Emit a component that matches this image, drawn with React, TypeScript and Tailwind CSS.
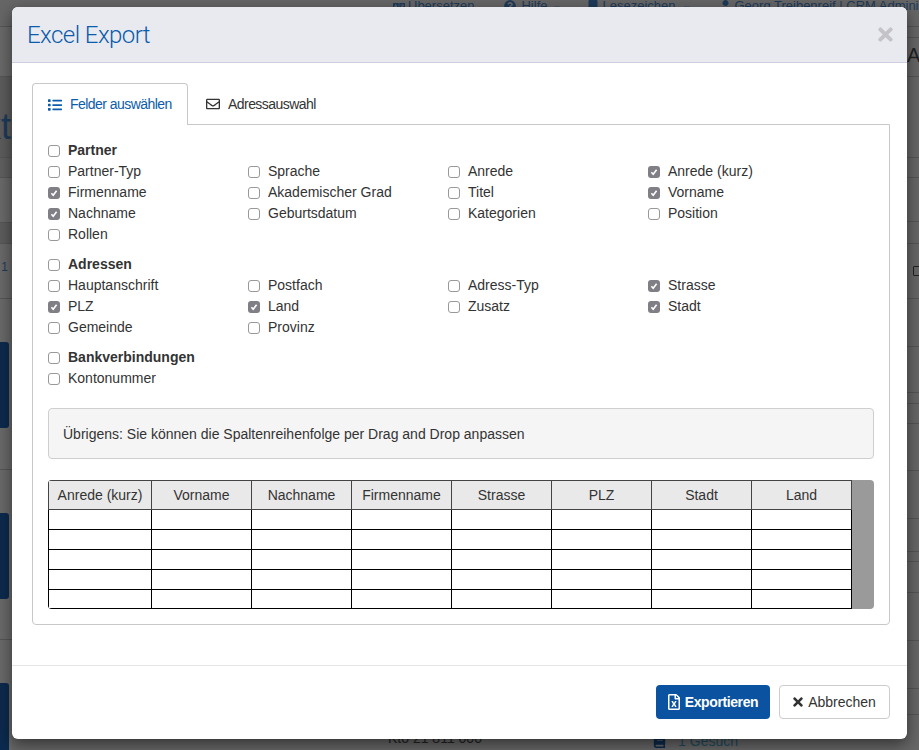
import { FaBook, FaBookmark, FaQuestionCircle, FaRegEnvelope, FaRegFileExcel, FaList, FaTimes, FaUser, FaLanguage, FaCaretDown } from 'react-icons/fa'

type Field = { label: string; checked?: boolean }

const partner: Field[] = [
  { label: 'Partner-Typ' },
  { label: 'Sprache' },
  { label: 'Anrede' },
  { label: 'Anrede (kurz)', checked: true },
  { label: 'Firmenname', checked: true },
  { label: 'Akademischer Grad' },
  { label: 'Titel' },
  { label: 'Vorname', checked: true },
  { label: 'Nachname', checked: true },
  { label: 'Geburtsdatum' },
  { label: 'Kategorien' },
  { label: 'Position' },
  { label: 'Rollen' },
]

const adressen: Field[] = [
  { label: 'Hauptanschrift' },
  { label: 'Postfach' },
  { label: 'Adress-Typ' },
  { label: 'Strasse', checked: true },
  { label: 'PLZ', checked: true },
  { label: 'Land', checked: true },
  { label: 'Zusatz' },
  { label: 'Stadt', checked: true },
  { label: 'Gemeinde' },
  { label: 'Provinz' },
]

const columns = ['Anrede (kurz)', 'Vorname', 'Nachname', 'Firmenname', 'Strasse', 'PLZ', 'Stadt', 'Land']

const leftRows = [
  { h: 'h-[50px]', bg: 'bg-[#696969]' },
  { h: 'h-[81px]', bg: 'bg-[#5c5c5c]', text: 't' },
  { h: 'h-[20px]', bg: 'bg-[#5f5f5f]' },
  { h: 'h-[45px]', bg: 'bg-[#696969]' },
  { h: 'h-[21px]', bg: 'bg-[#5c5c5c]' },
  { h: 'h-[55px]', bg: 'bg-[#696969]', text: '1' },
]

const rightRows = ['h-[11px]', 'h-[39px]', 'h-[81px]', 'h-[20px]', 'h-[44px]', 'h-[22px]', 'h-[55px]', 'h-[48px]', 'h-[46px]', 'h-[11px]', 'h-[20px]', 'h-[47px]', 'h-[48px]', 'h-[33px]', 'h-[10px]', 'h-[31px]', 'h-[48px]', 'h-[48px]', 'h-[26px]']

function Check({ label, checked, bold }: Field & { bold?: boolean }) {
  return (
    <label className={`flex h-[21px] items-center gap-2 text-[14px] text-[#333] ${bold ? 'font-bold' : ''}`}>
      {checked ? (
        <span className="flex h-3 w-3 items-center justify-center rounded-[3px] bg-[#807f85]">
          <svg viewBox="0 0 12 12" className="h-3 w-3" fill="none" stroke="white" strokeWidth="1.6">
            <path d="M3.4 6.2 5.2 8.2 8.6 3.8" />
          </svg>
        </span>
      ) : (
        <span className="h-3 w-3 rounded-[3px] border border-[#999] bg-white" />
      )}
      {label}
    </label>
  )
}

function Group({ title, fields }: { title: string; fields: Field[] }) {
  return (
    <div className="mb-[9px]">
      <Check label={title} bold />
      <div className="grid grid-cols-[repeat(4,200px)]">
        {fields.map((f) => (
          <Check key={f.label} {...f} />
        ))}
      </div>
    </div>
  )
}

function Backdrop() {
  return (
    <div className="flex h-[750px] w-[919px] flex-col overflow-hidden bg-[#666666] text-[14px] text-[#1d3a5a]">
      <div className="flex h-[27px] shrink-0 items-start border-b border-[#555] pl-[393px] text-[13px] leading-[12px] whitespace-nowrap">
        <FaLanguage className="mr-[3px] h-[12px] w-[12px] shrink-0" />
        <span className="shrink-0">Übersetzen</span>
        <FaQuestionCircle className="mr-[5px] ml-[30px] h-[12px] w-[12px] shrink-0" />
        <span className="shrink-0">Hilfe</span>
        <FaCaretDown className="mt-[3px] ml-[4px] h-[10px] w-[10px] shrink-0" />
        <FaBookmark className="mr-[5px] ml-[26px] h-[12px] w-[10px] shrink-0" />
        <span className="shrink-0">Lesezeichen</span>
        <FaCaretDown className="mt-[3px] ml-[6px] h-[10px] w-[10px] shrink-0" />
        <FaUser className="mr-[4px] ml-[28px] h-[12px] w-[11px] shrink-0" />
        <span className="shrink-0">Georg Treibenreif | CRM Administrator</span>
      </div>
      <div className="flex min-h-0 flex-1 justify-between">
        <div className="flex w-[12px] flex-col">
          {leftRows.map((r, i) => (
            <div key={i} className={`${r.h} ${r.bg} shrink-0 overflow-hidden border-b border-[#555]`}>
              {r.text === 't' && (
                <span className="mt-[32px] flex justify-end pr-px text-[36px] leading-[36px] text-[#1d3a5a]">kt</span>
              )}
              {r.text === '1' && <span className="mt-[17px] block pr-[4px] text-right text-[12px] leading-[12px]">1</span>}
            </div>
          ))}
          {[0, 1, 2].map((i) => (
            <div key={i} className={`${i === 0 ? 'h-[171px]' : 'h-[170px]'} shrink-0 border-b border-[#555] bg-[#696969] pt-[43px]`}>
              <div className="h-[86px] w-[9px] rounded-r-[3px] bg-[#0c2a4d]" />
            </div>
          ))}
        </div>
        <div className="flex flex-1 items-end justify-between pr-[169px] pl-[376px] leading-[17px] whitespace-nowrap">
          <span className="mb-[3px] text-[#222]">Kto 21 811 000</span>
          <span className="flex items-center gap-[12px] text-[#1c4a5e]">
            <FaBook className="h-[13px] w-[13px] text-[#0c2a4d]" />1 Gesuch
          </span>
        </div>
        <div className="w-[12px]">
          {rightRows.map((h, i) => (
            <div key={i} className={`${h} overflow-hidden border-b border-[#555]`}>
              {i === 1 && <span className="mt-[7px] block text-[20px] leading-[20px] text-[#222]">A</span>}
              {i === 6 && <span className="mt-[22px] ml-[6px] block h-[10px] w-[8px] rounded-[1px] border border-[#222]" />}
            </div>
          ))}
        </div>
      </div>
    </div>
  )
}

export default function App() {
  return (
    <div className="relative h-[750px] w-[919px] overflow-hidden font-['Liberation_Sans',Arial,sans-serif]">
      <Backdrop />

      <div className="absolute top-[7px] left-[12px] flex h-[732px] w-[895px] flex-col overflow-hidden rounded-[6px] bg-white shadow-[0_5px_15px_rgba(0,0,0,0.5)]">
        <div className="flex h-[56px] shrink-0 items-center justify-between border-b border-[#cfcfe3] bg-[#e9eaf0] pr-[14px] pl-[15px]">
          <h4 className="font-['Roboto',sans-serif] text-[24px] font-light tracking-[-0.55px] text-[#0b5cab]">Excel Export</h4>
          <FaTimes className="h-[21px] w-[15px] text-[#c4c4c8]" />
        </div>

        <div className="flex-1 pt-[20px] pr-[17px] pl-[20px]">
          <div className="flex h-[42px] text-[14px] tracking-[-0.55px]">
            <div className="relative z-10 flex h-[42px] w-[156px] items-center gap-[8px] rounded-t-[4px] border border-b-0 border-[#c8c8c8] bg-white pl-[15px] text-[#0b5cab]">
              <FaList className="h-[14px] w-[14px]" />
              Felder auswählen
            </div>
            <div className="flex items-center gap-[8px] pl-[18px] text-[#333]">
              <FaRegEnvelope className="h-[14px] w-[14px]" />
              Adressauswahl
            </div>
          </div>

          <div className="-mt-px h-[501px] rounded-b-[4px] border border-[#c8c8c8] px-[15px] pt-[15px]">
            <Group title="Partner" fields={partner} />
            <Group title="Adressen" fields={adressen} />
            <Group title="Bankverbindungen" fields={[{ label: 'Kontonummer' }]} />

            <div className="mt-[19px] mb-[21px] flex h-[51px] items-center rounded-[4px] border border-[#cfcfcf] bg-[#f5f5f5] px-[14px] pt-px text-[14px] text-[#333]">
              Übrigens: Sie können die Spaltenreihenfolge per Drag and Drop anpassen
            </div>

            <div className="h-[129px] overflow-hidden rounded-[4px] bg-[#9a9a9a]">
              <table className="w-[803px] table-fixed border-collapse text-[14px] text-[#333]">
                <thead>
                  <tr className="h-[29px] bg-[#e9e9e9]">
                    {columns.map((c, i) => (
                      <th key={c} className={`${i === 0 ? 'w-[103px]' : 'w-[100px]'} border border-[#444] font-normal`}>
                        {c}
                      </th>
                    ))}
                  </tr>
                </thead>
                <tbody>
                  {[0, 1, 2, 3, 4].map((r) => (
                    <tr key={r} className={`${r === 4 ? 'h-[19px]' : 'h-[20px]'} bg-white`}>
                      {columns.map((c) => (
                        <td key={c} className="border border-black" />
                      ))}
                    </tr>
                  ))}
                </tbody>
              </table>
            </div>
          </div>
        </div>

        <div className="flex h-[74px] shrink-0 items-start justify-end gap-[9px] border-t border-[#e5e5e5] pt-[19px] pr-[17px]">
          <button className="flex h-[34px] w-[114px] items-center justify-center gap-[5px] rounded-[4px] bg-[#0b52a0] text-[14px] font-bold tracking-[-0.4px] text-white">
            <FaRegFileExcel className="h-[16px] w-[12px]" />
            Exportieren
          </button>
          <button className="flex h-[34px] w-[111px] items-center justify-center gap-[5px] rounded-[4px] border border-[#cccccc] bg-white text-[14px] text-[#333]">
            <FaTimes className="h-[14px] w-[10px]" />
            Abbrechen
          </button>
        </div>
      </div>
    </div>
  )
}
